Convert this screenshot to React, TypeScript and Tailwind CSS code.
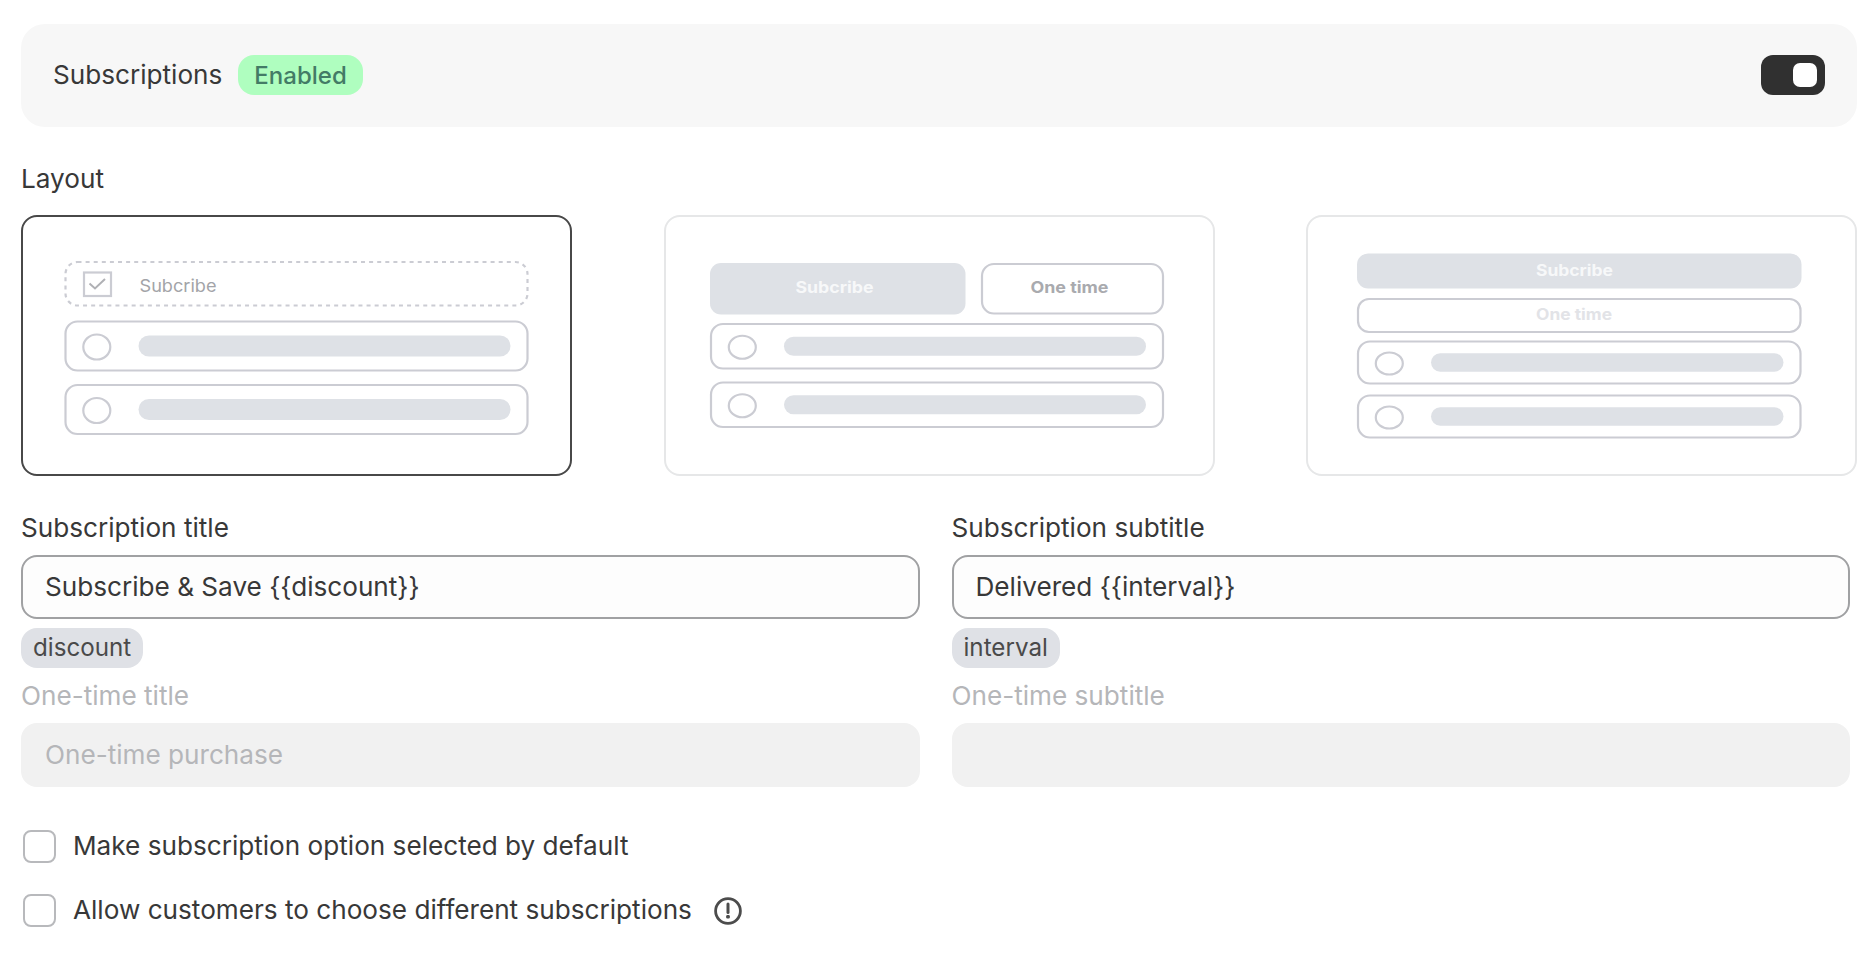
import React, { useState } from 'react';

type LayoutId = 'checkbox' | 'tabs' | 'stacked';

const LINE = '#cbccd3';
const FILL = '#dee1e6';

interface OptionRowProps {
  x: number;
  y: number;
  width: number;
  height: number;
  ry: number;
  barHeight: number;
}

// Radio circle + placeholder bar inside a rounded box
const OptionRow: React.FC<OptionRowProps> = ({ x, y, width, height, ry, barHeight }) => (
  <g>
    <rect x={x + 1} y={y + 1} width={width - 2} height={height - 2} rx="12" fill="none" stroke={LINE} strokeWidth="2.2" />
    <ellipse cx={x + 32.3} cy={y + height / 2 + 1} rx="13.5" ry={ry} fill="none" stroke={LINE} strokeWidth="2.2" />
    <rect x={x + 74} y={y + (height - barHeight) / 2} width={width - 92} height={barHeight} rx={barHeight / 2} fill={FILL} />
  </g>
);

const CheckboxPreview = () => (
  <svg viewBox="0 0 547 257" className="w-full h-full">
    <rect x="42.5" y="45" width="462" height="43.5" rx="12" fill="none" stroke={LINE} strokeWidth="2.2" strokeDasharray="4 4.1" />
    <rect x="61" y="55.5" width="27" height="23.5" fill="none" stroke={LINE} strokeWidth="2.2" />
    <path d="M66.5 66.5 L72 71.5 L82 62" fill="none" stroke="#b0b1b5" strokeWidth="2" />
    <text x="116.5" y="74.5" fontSize="17" textLength="77" lengthAdjust="spacingAndGlyphs" fill="#a3a4a8">Subcribe</text>
    <OptionRow x={41.5} y={103.5} width={464} height={51} ry={12.5} barHeight={21} />
    <OptionRow x={41.5} y={167} width={464} height={51} ry={12.5} barHeight={21} />
  </svg>
);

const TabsPreview = () => (
  <svg viewBox="0 0 547 257" className="w-full h-full">
    <rect x="44" y="46" width="255.5" height="51.5" rx="11" fill={FILL} />
    <text x="129.5" y="75.5" fontSize="16" fontWeight="700" textLength="78" lengthAdjust="spacingAndGlyphs" fill="#f7f8f9">Subcribe</text>
    <rect x="316" y="47" width="181" height="49.5" rx="12" fill="none" stroke={LINE} strokeWidth="2.2" />
    <text x="364.5" y="75.5" fontSize="16" fontWeight="700" textLength="78" lengthAdjust="spacingAndGlyphs" fill="#a9aaae">One time</text>
    <OptionRow x={44} y={106} width={454} height={46.5} ry={11.5} barHeight={19} />
    <OptionRow x={44} y={164.5} width={454} height={46.5} ry={11.5} barHeight={19} />
  </svg>
);

const StackedPreview = () => (
  <svg viewBox="0 0 547 257" className="w-full h-full">
    <rect x="49" y="36.5" width="444.5" height="35" rx="11" fill={FILL} />
    <text x="228" y="58.5" fontSize="15.5" fontWeight="700" textLength="77" lengthAdjust="spacingAndGlyphs" fill="#f7f8f9">Subcribe</text>
    <rect x="50" y="82" width="442.5" height="33" rx="11" fill="none" stroke={LINE} strokeWidth="2.2" />
    <text x="228" y="102.5" fontSize="15.5" fontWeight="700" textLength="76" lengthAdjust="spacingAndGlyphs" fill="#e2e3e7">One time</text>
    <OptionRow x={49} y={123.5} width={444.5} height={44} ry={11} barHeight={18.5} />
    <OptionRow x={49} y={177.5} width={444.5} height={44} ry={11} barHeight={18.5} />
  </svg>
);

const layouts: { id: LayoutId; preview: React.ReactNode }[] = [
  { id: 'checkbox', preview: <CheckboxPreview /> },
  { id: 'tabs', preview: <TabsPreview /> },
  { id: 'stacked', preview: <StackedPreview /> },
];

interface FieldProps {
  label: string;
  defaultValue?: string;
  tag?: string;
  disabled?: boolean;
}

const Field: React.FC<FieldProps> = ({ label, defaultValue = '', tag, disabled }) => (
  <div className="flex flex-col items-start">
    <label className={`h-[40px] leading-[41px] mb-2 ${disabled ? 'text-[#b5b6b9]' : ''}`}>{label}</label>
    <input
      disabled={disabled}
      defaultValue={defaultValue}
      className={`w-full h-16 px-[22px] pb-0.5 rounded-2xl outline-none border-2 ${disabled ? 'bg-[#f1f1f1] border-[#f1f1f1] text-[#b5b6b9]' : 'bg-[#fdfdfd] border-[#a0a1a3]'}`}
    />
    {tag && (
      <span className="mt-[9px] h-[40px] px-3 rounded-2xl bg-[#dfe1e6] text-[24.2px] leading-[40px] text-[#4a4a4a]">{tag}</span>
    )}
  </div>
);

const Checkbox: React.FC<{ label: string; children?: React.ReactNode }> = ({ label, children }) => (
  <label className="flex items-center h-16">
    <input type="checkbox" className="appearance-none w-[33px] h-[33px] mr-[17px] rounded-[8px] border-2 border-[#b8b9bc] bg-white checked:bg-[#303030]" />
    <span>{label}</span>
    {children}
  </label>
);

const App: React.FC = () => {
  const [enabled, setEnabled] = useState(true);
  const [selected, setSelected] = useState<LayoutId>('checkbox');

  return (
    <div className="h-[953px] bg-white pl-[21px] pr-[17px] pt-6 font-['Inter',sans-serif] text-[26.15px] font-normal text-[#383838]">
      {/* Header */}
      <div className="flex items-center justify-between h-[103px] pb-px px-8 rounded-3xl bg-[#f7f7f7]">
        <div className="flex items-center gap-4">
          <span>Subscriptions</span>
          <span className="h-10 px-4 rounded-2xl bg-[#affebf] text-[24px] leading-[41px] font-medium text-[#437b66]">{enabled ? 'Enabled' : 'Disabled'}</span>
        </div>
        <button
          onClick={() => setEnabled(!enabled)}
          className={`flex items-center w-16 h-10 px-2 rounded-xl ${enabled ? 'justify-end bg-[#303030]' : 'justify-start bg-[#b5b5b5]'}`}
        >
          <span className="w-6 h-6 rounded-[7px] bg-white" />
        </button>
      </div>

      {/* Layout picker */}
      <h2 className="mt-8 mb-4 h-10 leading-[40px]">Layout</h2>
      <div className="flex justify-between">
        {layouts.map(({ id, preview }) => (
          <button
            key={id}
            onClick={() => setSelected(id)}
            className={`w-[551px] h-[261px] rounded-2xl border-2 overflow-hidden ${selected === id ? 'border-[#484848]' : 'border-[#e6e7e8]'}`}
          >
            {preview}
          </button>
        ))}
      </div>

      {/* Texts */}
      <div className="grid grid-cols-2 gap-x-8 mt-[31px] mr-[7px]">
        <Field label="Subscription title" defaultValue="Subscribe & Save {{discount}}" tag="discount" />
        <Field label="Subscription subtitle" defaultValue="Delivered {{interval}}" tag="interval" />
        <div className="col-span-2 h-[7px]" />
        <Field label="One-time title" defaultValue="One-time purchase" disabled />
        <Field label="One-time subtitle" disabled />
      </div>

      <div className="flex flex-col mt-[27px] pl-0.5">
        <Checkbox label="Make subscription option selected by default" />
        <Checkbox label="Allow customers to choose different subscriptions">
          <svg viewBox="0 0 28 28" className="w-7 h-7 ml-[22px] mt-px" fill="none" stroke="#4c4c4c" strokeWidth="3">
            <circle cx="14" cy="14" r="12.4" strokeWidth="2.8" />
            <path d="M14 7v8.5" strokeLinecap="round" strokeWidth="3" />
            <rect x="12.2" y="18" width="3.6" height="3.4" rx="1.2" fill="#4c4c4c" stroke="none" />
          </svg>
        </Checkbox>
      </div>
    </div>
  );
};

export default App;
